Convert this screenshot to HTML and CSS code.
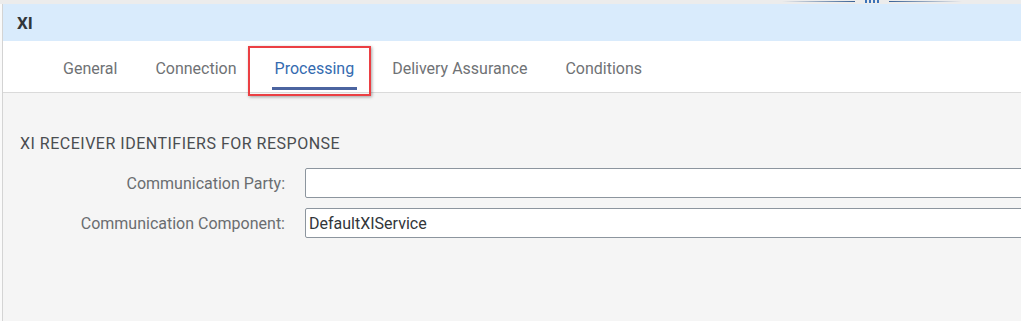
FILE: index.html
```html
<!DOCTYPE html>
<html lang="en">
<head>
  <meta charset="UTF-8">
  <title>XI Channel - Processing</title>
  <link rel="stylesheet" href="styles.css">
</head>
<body>
  <!-- Top strip with the shell handle -->
  <div class="top-strip">
    <div class="handle">
      <span class="handle-line left"></span>
      <span class="handle-grip"><i></i><i></i><i></i><i></i></span>
      <span class="handle-line right"></span>
    </div>
  </div>

  <div class="frame">
    <div class="header">XI</div>

    <!-- Tab bar -->
    <div class="tabs">
      <div class="tab">General</div>
      <div class="tab">Connection</div>
      <div class="tab active">Processing<span class="highlight"></span></div>
      <div class="tab">Delivery Assurance</div>
      <div class="tab">Conditions</div>
    </div>

    <!-- Processing content -->
    <div class="content">
      <div class="section-title">XI RECEIVER IDENTIFIERS FOR RESPONSE</div>
      <div class="form">
        <label class="label">Communication Party:</label>
        <div class="field"><input type="text" class="input" value=""></div>
        <label class="label">Communication Component:</label>
        <div class="field"><input type="text" class="input" value="DefaultXIService"></div>
      </div>
    </div>
  </div>
</body>
</html>
```

FILE: styles.css
```css
/* General Styles */
body {
  margin: 0;
  height: 321px;
  overflow: hidden;
  background-color: #fafafa;
  font-family: Roboto, "Liberation Sans", sans-serif;
  color: #32363a;
}

/* Top Strip */
.top-strip {
  height: 4px;
  background-color: #ececec;
  display: flex;
  justify-content: flex-end;
  padding-right: 59px;
  overflow: hidden;
}

.handle {
  display: flex;
  align-items: flex-start;
  gap: 10px;
}

.handle-line {
  display: block;
  width: 73px;
  height: 1px;
  margin-top: 1px;
}

.handle-line.left {
  background: linear-gradient(to right, rgba(58, 98, 150, 0), #3a6296);
}

.handle-line.right {
  background: linear-gradient(to left, rgba(58, 98, 150, 0), #3a6296);
}

.handle-grip {
  display: flex;
  gap: 2px;
}

.handle-grip i {
  display: block;
  width: 2px;
  height: 3px;
  background-color: #3d73b8;
}

/* Frame */
.frame {
  margin-left: 2px;
  border-left: 1px solid #d4d4d4;
}

.header {
  height: 37px;
  background-color: #d9ebfc;
  padding-left: 14px;
  font-size: 17px;
  font-weight: bold;
  line-height: 38px;
  color: #32363a;
}

/* Tabs */
.tabs {
  height: 51px;
  background-color: #ffffff;
  border-bottom: 1px solid #dadada;
  display: flex;
  align-items: stretch;
  gap: 32px;
  padding-left: 57px;
  box-shadow: 0 1px 1px rgba(0, 0, 0, 0.04);
}

.tab {
  position: relative;
  padding: 1px 3px 0;
  font-size: 16px;
  line-height: 54px;
  color: #6f7275;
}

.tab.active {
  color: #346bb0;
}

.tab.active::after {
  content: "";
  position: absolute;
  left: 0;
  right: 0;
  bottom: 2px;
  height: 3px;
  background-color: #4b64a0;
}

/* Red annotation box */
.highlight {
  position: absolute;
  left: -24px;
  right: -14px;
  top: 5px;
  bottom: -4px;
  border: 2px solid #eb3f43;
  box-shadow: 1px 1px 3px rgba(0, 0, 0, 0.35);
  pointer-events: none;
}

/* Content */
.content {
  box-sizing: border-box;
  background-color: #f5f5f5;
  height: 228px;
  padding: 42px 0 0 17px;
}

.section-title {
  font-size: 16px;
  letter-spacing: 0.5px;
  color: #4a4d50;
  line-height: 18px;
  margin-bottom: 15px;
}

.form {
  display: grid;
  grid-template-columns: 265px 1fr;
  column-gap: 20px;
  row-gap: 10px;
  align-items: center;
}

.label {
  text-align: right;
  font-size: 16px;
  color: #6a6d70;
}

.field {
  overflow: hidden;
}

.input {
  display: block;
  box-sizing: border-box;
  width: calc(100% + 10px);
  height: 30px;
  margin: 0;
  padding: 0 3px;
  border: 1px solid #8c959e;
  border-radius: 2px;
  background-color: #ffffff;
  font-family: Roboto, "Liberation Sans", sans-serif;
  font-size: 16px;
  color: #32363a;
  outline: none;
}
```
